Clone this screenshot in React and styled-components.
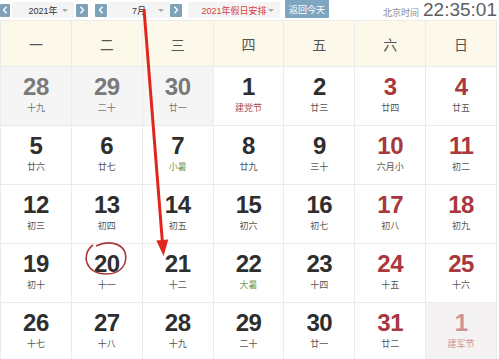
import * as React from "react";
import styled, { createGlobalStyle } from "styled-components";

const GlobalStyle = createGlobalStyle`
    html, body {
        margin: 0;
        padding: 0;
        background: #ffffff;
        font-family: "Liberation Sans", "Noto Sans CJK SC", sans-serif;
    }
`;

const Pagina = styled.div`
    position: relative;
    width: 499px;
    height: 359px;
    overflow: hidden;
    background: #ffffff;
`;

const Barra = styled.div`
    display: flex;
    align-items: center;
    height: 20px;
    padding-left: 0;
`;

const BotonFlecha = styled.div`
    display: flex;
    align-items: center;
    justify-content: center;
    width: ${(p) => p.$w || 12}px;
    height: 13px;
    margin-left: ${(p) => p.$ml || 0}px;
    background: #7ea3b9;
    border-radius: 1px;
`;

const Selector = styled.div`
    position: relative;
    display: flex;
    align-items: center;
    justify-content: center;
    width: ${(p) => p.$w}px;
    height: 16px;
    margin-left: ${(p) => p.$ml || 0}px;
    background: #f4f4f4;
    color: ${(p) => (p.$rojo ? "#d6403d" : "#333333")};
    font-family: "Liberation Sans", "Noto Sans CJK SC", sans-serif;
    font-size: 9px;

    &::after {
        content: "";
        position: absolute;
        right: 6px;
        top: 7px;
        border-left: 3px solid transparent;
        border-right: 3px solid transparent;
        border-top: 3px solid #a9a9a9;
    }
`;

const BotonHoy = styled.div`
    display: flex;
    align-items: center;
    justify-content: center;
    width: 44px;
    height: 18px;
    margin-left: 5px;
    margin-top: -2px;
    background: #7ea6c0;
    color: #ffffff;
    font-family: "Noto Sans CJK SC", sans-serif;
    font-size: 9px;
    border-radius: 1px;
`;

const Reloj = styled.div`
    display: flex;
    align-items: baseline;
    margin-left: auto;
    margin-right: 2px;
    gap: 4px;
`;

const RelojEtiqueta = styled.span`
    font-family: "Noto Sans CJK SC", sans-serif;
    font-size: 9px;
    color: #8a8a8a;
`;

const RelojHora = styled.span`
    font-family: "Liberation Sans", sans-serif;
    font-size: 19px;
    color: #5e5e5e;
    line-height: 20px;
`;

const Cuadricula = styled.div`
    display: grid;
    grid-template-columns: repeat(7, 1fr);
    grid-template-rows: 45px repeat(5, 58px);
    gap: 1px;
    width: 497px;
    background: #ebebeb;
    border: 1px solid #ebebeb;
    border-bottom: none;
    box-sizing: border-box;
`;

const Cabecera = styled.div`
    display: flex;
    align-items: center;
    justify-content: center;
    background: #fdf9ea;
    color: #555555;
    font-family: "Noto Sans CJK SC", sans-serif;
    font-size: 14px;
`;

const colores = {
    normal: { fondo: "#ffffff", num: "#2e2e2e", sub: "#555555" },
    finde: { fondo: "#ffffff", num: "#a8383d", sub: "#555555" },
    previo: { fondo: "#f5f5f5", num: "#7a7a7a", sub: "#777777" },
    siguiente: { fondo: "#f4f2f2", num: "#cf9396", sub: "#cf8f93" },
};

const Celda = styled.div`
    display: flex;
    flex-direction: column;
    align-items: center;
    padding-top: 9px;
    background: ${(p) => colores[p.$tipo].fondo};
`;

const Numero = styled.div`
    font-family: "Liberation Sans", sans-serif;
    font-weight: bold;
    font-size: 24px;
    line-height: 22px;
    letter-spacing: -0.5px;
    color: ${(p) => colores[p.$tipo].num};
`;

const Lunar = styled.div`
    margin-top: 4px;
    font-family: "Noto Sans CJK SC", sans-serif;
    font-size: 9px;
    line-height: 12px;
    color: ${(p) =>
        p.$fiesta === "rojo"
            ? "#a94a4a"
            : p.$fiesta === "verde"
            ? "#79a05c"
            : colores[p.$tipo].sub};
`;

const Anotacion = styled.svg`
    position: absolute;
    left: 0;
    top: 0;
    pointer-events: none;
`;

const Chevron = ({ dir }) => (
    <svg width="6" height="8" viewBox="0 0 6 8">
        <path
            d={dir === "izq" ? "M4.5 0.8 L1.5 4 L4.5 7.2" : "M1.5 0.8 L4.5 4 L1.5 7.2"}
            stroke="#ffffff"
            strokeWidth="1.4"
            fill="none"
        />
    </svg>
);

const dias = ["一", "二", "三", "四", "五", "六", "日"];

const semanas = [
    [[28, "十九", "previo"], [29, "二十", "previo"], [30, "廿一", "previo"], [1, "建党节", "normal", "rojo"], [2, "廿三"], [3, "廿四"], [4, "廿五"]],
    [[5, "廿六"], [6, "廿七"], [7, "小暑", "normal", "verde"], [8, "廿九"], [9, "三十"], [10, "六月小"], [11, "初二"]],
    [[12, "初三"], [13, "初四"], [14, "初五"], [15, "初六"], [16, "初七"], [17, "初八"], [18, "初九"]],
    [[19, "初十"], [20, "十一"], [21, "十二"], [22, "大暑", "normal", "verde"], [23, "十四"], [24, "十五"], [25, "十六"]],
    [[26, "十七"], [27, "十八"], [28, "十九"], [29, "二十"], [30, "廿一"], [31, "廿二"], [1, "建军节", "siguiente"]],
];

const App = () => {
    return (
        <Pagina>
            <GlobalStyle />
            <Barra>
                <BotonFlecha $w={10}>
                    <Chevron dir="izq" />
                </BotonFlecha>
                <Selector $w={62} $ml={2}>2021年</Selector>
                <BotonFlecha $ml={2}>
                    <Chevron dir="der" />
                </BotonFlecha>
                <BotonFlecha $ml={7}>
                    <Chevron dir="izq" />
                </BotonFlecha>
                <Selector $w={62} $ml={1}>7月</Selector>
                <BotonFlecha $ml={0}>
                    <Chevron dir="der" />
                </BotonFlecha>
                <Selector $w={92} $ml={6} $rojo>
                    2021年假日安排
                </Selector>
                <BotonHoy>返回今天</BotonHoy>
                <Reloj>
                    <RelojEtiqueta>北京时间</RelojEtiqueta>
                    <RelojHora>22:35:01</RelojHora>
                </Reloj>
            </Barra>
            <Cuadricula>
                {dias.map((d) => (
                    <Cabecera key={d}>{d}</Cabecera>
                ))}
                {semanas.map((semana, i) =>
                    semana.map(([num, sub, tipo, fiesta], j) => {
                        const t = tipo || (j >= 5 ? "finde" : "normal");
                        return (
                            <Celda key={`${i}-${j}`} $tipo={t}>
                                <Numero $tipo={t}>{num}</Numero>
                                <Lunar $tipo={t} $fiesta={fiesta}>
                                    {sub}
                                </Lunar>
                            </Celda>
                        );
                    })
                )}
            </Cuadricula>
            <Anotacion width="499" height="359" viewBox="0 0 499 359">
                <path
                    d="M93 245 C80 255, 86 274, 106 274 C122 274, 128 263, 125 252 C121 243, 108 240, 96 246"
                    stroke="#a8393c"
                    strokeWidth="1.6"
                    fill="none"
                />
                <line x1="144" y1="9" x2="162.4" y2="242" stroke="#e3241d" strokeWidth="3" />
                <polygon points="163.6,256 156.3,240.5 168.3,239.5" fill="#e3241d" />
            </Anotacion>
        </Pagina>
    );
};

export default App;
